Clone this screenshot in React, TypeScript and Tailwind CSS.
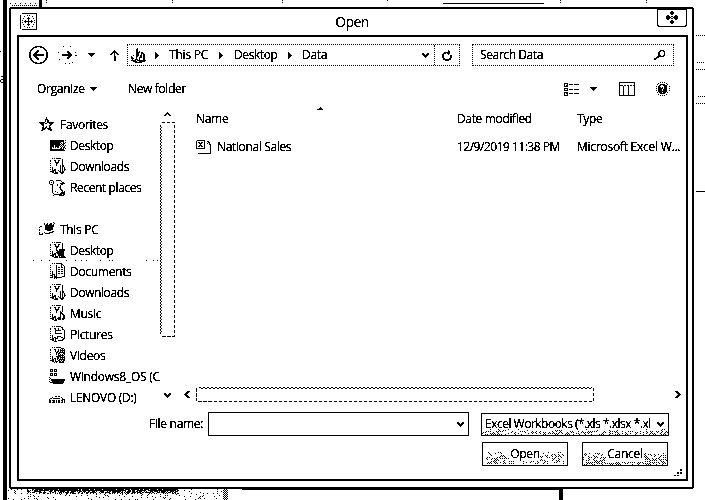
import React from "react";

type Rows = string[];

/* One-bit bitmap: every # is a black pixel. */
function Pix({ rows, className = "" }: { rows: Rows; className?: string }) {
  const w = Math.max(...rows.map((r) => r.length));
  let d = "";
  rows.forEach((r, y) => {
    for (let x = 0; x < r.length; x++) if (r[x] === "#") d += `M${x} ${y}h1v1h-1z`;
  });
  return (
    <svg width={w} height={rows.length} className={`block shrink-0 ${className}`} shapeRendering="crispEdges">
      <path d={d} />
    </svg>
  );
}

function noise(w: number, h: number, density: (x: number, y: number) => number, seed = 7, grid = true) {
  let s = seed;
  let d = "";
  for (let y = 0; y < h; y++)
    for (let x = 0; x < w; x++) {
      s = (s * 1103515245 + 12345) % 2147483648;
      if ((!grid || (x + y) % 2 === 0) && s / 2147483648 < density(x, y)) d += `M${x} ${y}h1v1h-1z`;
    }
  return d;
}

function Dither({ w, h, density, seed, className = "" }: { w: number; h: number; density: (x: number, y: number) => number; seed?: number; className?: string }) {
  return (
    <svg width={w} height={h} className={`absolute ${className}`} shapeRendering="crispEdges">
      <path d={noise(w, h, density, seed)} />
    </svg>
  );
}

const star = [
  ".......#.......", ".......#.......", "......###......", "......#.##.....", "......#.##.....",
  "######..#######", ".####.##..####.", "..###......##..", "...##.....##...", "....#..#..#....",
  "...##.##..##...", "...####.####...", "...###...####..", "..##.......##..",
];
const monitor = [
  "##############.#", "##############..", "###########..#.#", "##########.#.##.", "###########.##..",
  "####.#####.#.#.#", "####.####.#.#.#.", "##.#.#.##..#.##.", "##........##.#.#", "##############..", "###############.",
];
const folderTop = [
  "..#.#.#####.....", "............#...", "#...##..##..#...", "#....#..#...#...", ".....####...#...", "#.....##....#...",
];
const downloads = [
  ...folderTop,
  "......#.....#...", "#.....#...#.##..", "..........#.##..", "#.#.......#.#.#.", "..#.......#.#.#.",
  "#.#.##....#.#.##", "..####..#.#.#.#.", "####.#...##.##..", "..##.###..####..", "....####...##...",
];
const folderDesk = [
  ...folderTop,
  "......#.....#...", "#.....#..######.", "......##.######.", "#.#....#######..", "..#...########..",
  "#.#.##.#######..", "..####..######..", "####.#..######..", "..##.###.#.####.", "....####.#######",
];
const documents = [
  "..#.#.######....", "...........##...", "#.....#....#.#..", "......#....#..#.", "#.....#.##.##.#.", "......#.......#.",
  "#.....#.##.##.#.", "......#.......#.", "#.#...#.##.##.#.", "..#...#.......#.", "#.#...#.##.##.#.",
  "..###.#.......#.", "###.#.#.......#.", "..#.###.....###.", "###.########....", "....#.#.........",
];
const music = [
  ...folderTop,
  "......#...#.#...", "#.....#...##....", "..........###...", "#.#.......#.##..", "..#.......#..##.",
  "#.#.##....#..##.", "..####..###..##.", "####.#.####.###.", "..##.##.###.##..", "....###.........",
];
const pictures = [
  "..#.#.#####.....", "...........##...", "#...##..#...#...", "#....#..#...##..", ".....######...#.", "#....#........#.",
  ".....#........#.", "#....#######..#.", "..............#.", "#.#...........#.", "..#....####...#.",
  "#.#.##.#...##.#.", "..##.###.....##.", "####.#......##..", "..##.#..#####...", "....###.........",
];
const videos = [
  "..#.#.#####.....", "...........###..", "#...##..#.#.#.#.", "#....#..#.#####.", ".....#.##.#.#.#.", "#.....##.######.",
  "......#.##...##.", "#.....#.#.#.#.#.", "........######..", "#.#...#####.#.#.", "..#....##.#####.",
  "#.#.##.##.#.#.#.", "..##.#.#.######.", "####.#..##.#.##.", "..##.###.##.##..", "....#.#..#####..",
];
const recent = [
  ".###...#####....", "#...#.......#...", "#.#.#........##.", "#...#......#####", ".###....#...##..", "...#....#..#....",
  "...#.......#....", "...#......##....", "...#.......#....", "...#.......##...", "...#........##..",
  "...#..#......#.#", "...#....#...####", "....#......#####", ".....########.##", "....#.....#####.",
];
const thisPc = [
  "..............#.", ".....#..#..##..#", ".....#.##.###.#.", "......#########.", ".##...#########.", "#.....########..",
  "......########..", "#.....########..", "#.......####....", ".............##.", "#....#....####..", "#..#..#####.....", "####............",
];
const windisk = [
  ".###.###........", ".#.#.#.#........", ".###.###........", "................", ".###.###........", ".#.#.#.#........", ".###.###........",
  "................", "#...............", ".#..............", "#.##############", "..##############", "#..############.", ".##############.", "....##########..",
];
const lenovo = ["......##.##.....", "...#........#...", ".##.#######..#..", "#............###", "##.###.#.##.##.#", "##..##.#.##..#.#", "##.###.#.##.##.#"];
const crumbFolder = [
  "......#.........", ".....##.........", ".....##.........", ".....##.#.......", ".....####.##....", ".....###..###...", ".....###..#.##..",
  "..#..###.##.##..", "#....##..##.##..", "##...#..###.##..", "###..#..#...##..", ".#..###.#...##..", "#####.#########.", "..####..######..", "....#######.....",
];
const appIcon = [
  "..###############", "................#", "#......#.#......#", "#...#.......#...#", "#.......#.......#", "#..#...###...#..#",
  "#.......#.......#", "#.#..#..#..#..#.#", "#...#########...#", "#.#..#..#..#..#.#", "#.......#.......#", "#..#...###...#..#",
  "#.......#.......#", "#...#.......#...#", "#......#.#......#", "#...............#", "..###############",
];
const excel = [
  ".########......", "#.......#..##..", "#.##.##.#...##.", "#..###..#..#.#.", "#...#...#....##", "#..###..#.....#", "#.##.##.#.....#", "#.......#.....#",
  "#########.....#", "..............#", "..............#", "..............#", "..............#", "..#############",
];
const chevDown = ["##...##", "###.###", ".#####.", "..###..", "...#..."];
const chevUp = ["...#...", "..###..", ".##.##.", "##...##"];
const chevLeft = ["...###", "..###.", ".###..", "###...", ".###..", "..###.", "...###"];
const chevRight = ["###...", ".###..", "..###.", "...###", "..###.", ".###..", "###..."];
const triDown = ["#######", ".#####.", "..###..", "...#..."];
const triRight = ["#...", "##..", "###.", "####", "###.", "##..", "#..."];
const upArrow = ["....#....", "...###...", "..#####..", ".##.#.##.", "##..#..##", "....#....", "....##...", "....##...", "....##...", "....##...", "....##..."];
const refresh = ["......#...", "......##..", "..######..", ".###.###..", "##....#...", "##......##", "##......##", "##......##", ".##....##.", ".########.", "...####..."];
const search = ["......####.", ".....##..##", "....##....#", "....##....#", "....##....#", "....###..##", "...#######.", "..###......", "###........", "##........."];
const viewIcon = [
  "####...........", "#..#.####.#####", "#.##...........", "####...........", "...............", "####...........", "#..#.####.#####",
  "####...........", "...............", "####...........", "#.##.####.#####", "#..#...........", "####...........",
];
const paneIcon = [
  "################", "#..............#", "#..............#", "####.##.##.##.##", "#...#....#.....#", "#...#....#.....#", "#...#....#.....#",
  "#...#....#.....#", "#...#....#.....#", "#...#....#.....#", "#...#....#.....#", "#...#....#.....#", "#...#....#.....#", "################",
];
const help = [
  "....#.#.#.....", "..#.......#...", ".#..#####..#..", "...##..####...", "#.##....###..#", "..###.#.###...", "#.#####.###..#",
  "..####.####...", "#.####.####..#", "..#########...", ".#.###.###.#..", "....#####.....", "..#.......#...", "....#.#.#.....",
];
const closeIcon = [
  ".....##.....", "....####....", "....####....", ".....##.....", ".##......##.", "####.##.####", "#####..#####", "####.##.####", ".##......##.",
  ".....##.....", "....####....", "....####....", ".....##.....",
];
const grip = ["......##", "......##", "........", "...##.##", "...##.##", "........", "##.##...", "........"];
const sortMark = ["...#...", "..###..", "######."];

function NavRow({ icon, label, root = false, at = "mt-[2px]", track = "tracking-[-0.3px]", row = "h-[21px]", line = "leading-[21px]" }: { icon?: Rows; label?: string; root?: boolean; at?: string; track?: string; row?: string; line?: string }) {
  return (
    <div className={`flex shrink-0 items-start ${row} ${root ? "pl-5" : "pl-[30px]"}`}>
      {icon && <span className="w-[21px] shrink-0"><Pix rows={icon} className={at} /></span>}
      <span className={`whitespace-nowrap ${line} ${track}`}>{label}</span>
    </div>
  );
}

const zigzag = Array.from({ length: 209 }, (_, i) => (i % 3 === 2 ? ".#" : "#."));
const wave = [
  Array.from({ length: 393 }, (_, i) => (i % 4 < 2 ? "#" : ".")).join(""),
  Array.from({ length: 393 }, (_, i) => (i % 4 < 2 ? "." : "#")).join(""),
];

function Backdrop() {
  return (
    <svg width="705" height="500" className="absolute inset-0" shapeRendering="crispEdges" fill="none" stroke="#000">
      <path d="M3 0h4v500h-4zM39 0h3v7h-3z" fill="#000" stroke="none" />
      <path d="M443 3.5h101M696 191.5h9" />
      <path d="M10 3.5h28" strokeDasharray="1 4" />
      <path d="M12 5.5h26" strokeDasharray="1 1" />
      <path d="M46.5 0v4M172.5 0v4M282.5 0v4M387.5 0v2M560.5 0v4M646.5 0v4" strokeDasharray="1 1" />
      <path d="M696 35.5h9M697 62.5h8M696 69.5h9M698 96.5h7M696 103.5h9" strokeDasharray="1 1" />
      <path d="M242 488.5h320" strokeWidth="3" />
      <path d="M559 487h4v13h-4z" fill="#000" stroke="none" />
      <path d="M0 51.5h1M1 76.5h3M3 77v5M1 79.5h2M0 80v2M1 82.5h2" />
      <g transform="translate(8 488)" fill="#000" stroke="none">
        <path d={noise(214, 12, (_, y) => (y > 3 ? 0.13 : 0.06), 11)} />
        <path d={noise(152, 6, (x, y) => (y < 3 ? 0.88 : y < 5 ? 0.65 : 0.3) * (x < 8 ? 0.6 : 1), 5, false)} transform="translate(19 0)" />
      </g>
      <g transform="translate(223 488)" fill="#000" stroke="none"><path d={noise(5, 12, () => 1)} /></g>
    </svg>
  );
}

export default function App() {
  return (
    <div className="relative h-[500px] w-[705px] overflow-hidden bg-white font-['Open_Sans','Noto_Sans',sans-serif] text-[12px] leading-none text-black [filter:url(#mono)]">
      <svg width="0" height="0" className="absolute">
        <filter id="mono" x="0" y="0" width="100%" height="100%" colorInterpolationFilters="sRGB">
          <feColorMatrix type="saturate" values="0" />
          <feComponentTransfer>
            <feFuncR type="discrete" tableValues="0 0 0 0 0 0 0 1 1 1" />
            <feFuncG type="discrete" tableValues="0 0 0 0 0 0 0 1 1 1" />
            <feFuncB type="discrete" tableValues="0 0 0 0 0 0 0 1 1 1" />
          </feComponentTransfer>
        </filter>
      </svg>
      <Backdrop />

      <div className="absolute left-[9px] top-[7px] flex h-[482px] w-[685px] flex-col rounded-[3px] border-2 border-black bg-white pb-[6px] pl-[6px] pr-[4px]">
        <header className="flex h-[26px] shrink-0 items-start justify-between">
          <Pix rows={appIcon} className="ml-[3px] mt-[4px]" />
          <span className="ml-[10px] mt-[6px] text-[14px] tracking-[-0.6px]">Open</span>
          <div className="mr-px flex h-[18px] w-[30px] items-start justify-center rounded-b-[3px] border border-black pt-[1px]">
            <Pix rows={closeIcon} />
          </div>
        </header>

        <div className="flex min-h-0 flex-1 flex-col border-2 border-black">
          <nav className="flex h-[36px] shrink-0 items-center pl-[10px] pr-3">
            <svg width="19" height="20" fill="none" stroke="#000" className="shrink-0">
              <circle cx="9.5" cy="10" r="8.7" strokeWidth="1.3" />
              <path d="M14.5 10H6M9.5 5.5L5 10l4.5 4.5" strokeWidth="1.5" />
            </svg>
            <svg width="20" height="20" fill="none" stroke="#000" className="ml-[9px] shrink-0">
              <circle cx="10" cy="10" r="9" strokeDasharray="0.8 3" />
              <path d="M5 10h9M10 6l4 4-4 4" strokeWidth="1.3" />
            </svg>
            <Pix rows={triDown} className="ml-[11px]" />
            <Pix rows={upArrow} className="ml-[15px]" />
            <div className="ml-[8px] flex h-[22px] w-[333px] shrink-0 items-center border border-dotted border-black">
              <Pix rows={crumbFolder} className="ml-[3px] w-[16px]" />
              <Pix rows={triRight} className="ml-2" />
              <span className="ml-[10px] w-[41px] whitespace-nowrap tracking-[-0.2px]">This PC</span>
              <Pix rows={triRight} className="ml-[9px]" />
              <span className="ml-[11px] w-[43px] whitespace-nowrap tracking-[-0.4px]">Desktop</span>
              <Pix rows={triRight} className="ml-[11px]" />
              <span className="ml-[10px] tracking-[-0.3px]">Data</span>
              <Pix rows={chevDown} className="ml-auto" />
              <div className="ml-[5px] flex h-full w-[25px] items-center justify-center border-l border-dotted border-black">
                <Pix rows={refresh} />
              </div>
            </div>
            <div className="ml-3 flex h-[22px] w-[202px] shrink-0 items-center justify-between border border-dotted border-black pl-[7px] pr-2">
              <span className="tracking-[-0.4px]">Search Data</span>
              <Pix rows={search} />
            </div>
          </nav>

          <div className="flex h-[30px] shrink-0 items-center pl-[18px] pr-4 pt-[2px]">
            <span className="w-[48px] tracking-[-0.3px]">Organize</span>
            <Pix rows={triDown} className="ml-[5px]" />
            <span className="ml-[31px] tracking-[-0.35px]">New folder</span>
            <Pix rows={viewIcon} className="ml-auto" />
            <Pix rows={triDown} className="ml-[11px]" />
            <Pix rows={paneIcon} className="ml-[22px]" />
            <Pix rows={help} className="ml-[21px]" />
          </div>

          <main className="flex h-[300px] shrink-0">
            <aside className="relative flex h-full w-[141px] shrink-0 flex-col pt-[11px]">
              <NavRow root icon={star} label="Favorites" at="mt-[3px]" />
              <NavRow icon={monitor} label="Desktop" at="ml-[1px] mt-[5px]" track="tracking-[-0.4px]" />
              <NavRow icon={downloads} label="Downloads" at="ml-[1px] mt-[2px]" track="tracking-[-0.4px]" />
              <NavRow icon={recent} label="Recent places" at="mt-[3px]" track="tracking-[-0.4px]" />
              <NavRow />
              <NavRow root icon={thisPc} label="This PC" at="mt-[3px]" />
              <NavRow icon={folderDesk} label="Desktop" at="ml-[1px] mt-[2px]" track="tracking-[-0.4px]" />
              <NavRow icon={documents} label="Documents" at="ml-[1px] mt-[2px]" />
              <NavRow icon={downloads} label="Downloads" at="ml-[1px] mt-[2px]" track="tracking-[-0.4px]" />
              <NavRow icon={music} label="Music" at="ml-[1px] mt-[2px]" />
              <NavRow icon={pictures} label="Pictures" at="ml-[1px] mt-[2px]" />
              <NavRow icon={videos} label="Videos" at="ml-[1px] mt-[2px]" />
              <NavRow icon={windisk} label="Windows8_OS (C" at="mt-[3px]" track="tracking-[-0.25px]" />
              <NavRow icon={lenovo} label="LENOVO (D:)" at="mt-[9px]" />
              <svg width="127" height="1" className="absolute left-[14px] top-[157px]" shapeRendering="crispEdges">
                <path d="M0 0h1v1H0zM8 0h1v1H8zM16 0h1v1h-1zM33 0h1v1h-1zM42 0h1v1h-1zM48 0h1v1h-1zM53 0h1v1h-1zM67 0h1v1h-1zM76 0h1v1h-1zM79 0h1v1h-1zM113 0h1v1h-1zM120 0h1v1h-1zM124 0h1v1h-1z" />
              </svg>
            </aside>
            <div className="flex w-[15px] shrink-0 flex-col items-center pt-[9px]">
              <Pix rows={chevUp} />
              <div className="mt-[6px] h-[215px] w-[15px] rounded-[2px] border border-dashed border-black border-l-transparent pt-[2px]">
                <Pix rows={zigzag} className="ml-[-1px]" />
              </div>
              <Pix rows={chevDown} className="mt-[56px]" />
            </div>
            <section className="flex min-w-0 flex-1 flex-col pl-[7px]">
              <div className="flex h-[2px] shrink-0 items-end pl-[135px]"><Pix rows={sortMark} className="relative top-[5px]" /></div>
              <div className="flex h-[28px] shrink-0 items-center pl-[14px]">
                <span className="w-[261px] tracking-[-0.3px]">Name</span>
                <span className="w-[120px] tracking-[-0.35px]">Date modified</span>
                <span className="tracking-[-0.3px]">Type</span>
              </div>
              <div className="flex h-[28px] shrink-0 items-center whitespace-nowrap pl-[14px]">
                <Pix rows={excel} className="mr-[6px]" />
                <span className="w-[240px] tracking-[-0.35px]">National Sales</span>
                <span className="w-[120px] tracking-[-0.5px]">12/9/2019 11:38 PM</span>
                <span className="tracking-[-0.25px]">Microsoft Excel W...</span>
              </div>
              <div className="mt-auto flex h-[17px] items-center pr-[5px]">
                <Pix rows={chevLeft} className="ml-[2px]" />
                <div className="ml-[6px] h-[15px] w-[398px] rounded-[2px] border border-dashed border-black border-t-transparent pl-[2px]">
                  <Pix rows={wave} className="mt-[-1px]" />
                </div>
                <Pix rows={chevRight} className="ml-auto" />
              </div>
            </section>
          </main>

          <footer className="flex min-h-0 flex-1 flex-col">
            <div className="mt-[9px] flex h-6 shrink-0 items-center">
              <span className="ml-[130px] w-[59px] whitespace-nowrap tracking-[-0.3px]">File name:</span>
              <div className="flex h-6 w-[261px] items-center justify-end border border-black pr-1">
                <Pix rows={chevDown} />
              </div>
              <div className="relative ml-3 flex h-[23px] w-[188px] items-center whitespace-nowrap border border-black pl-[3px]">
                <Dither w={186} h={6} density={(_, y) => (y < 2 ? 0.1 : 0.4)} className="bottom-0 left-0" />
                <span className="w-[171px] tracking-[-0.5px]">Excel Workbooks (*.xls *.xlsx *.xl</span>
                <Pix rows={chevDown} className="ml-[1px]" />
              </div>
            </div>
            <div className="mt-[6px] flex h-6 shrink-0 gap-[14px] pl-[463px]">
              <button className="relative h-6 w-[86px] border border-black tracking-[-0.3px]">
                <Dither w={78} h={12} density={(x, y) => (x > 22 && x < 54 && y < 9 ? 0 : y > 2 ? 0.36 : 0.22)} seed={23} className="bottom-[1px] left-[3px]" />
                <span className="relative">Open</span>
              </button>
              <button className="relative h-6 w-[86px] border border-black tracking-[-0.3px]">
                <Dither w={84} h={12} density={(x, y) => (x > 22 && x < 61 && y < 9 ? 0 : y > 3 ? 0.55 : 0.28)} seed={31} className="bottom-0 left-0" />
                <span className="relative">Cancel</span>
              </button>
            </div>
            <div className="flex justify-end pr-[4px] pt-[3px]"><Pix rows={grip} /></div>
          </footer>
        </div>
      </div>
    </div>
  );
}
